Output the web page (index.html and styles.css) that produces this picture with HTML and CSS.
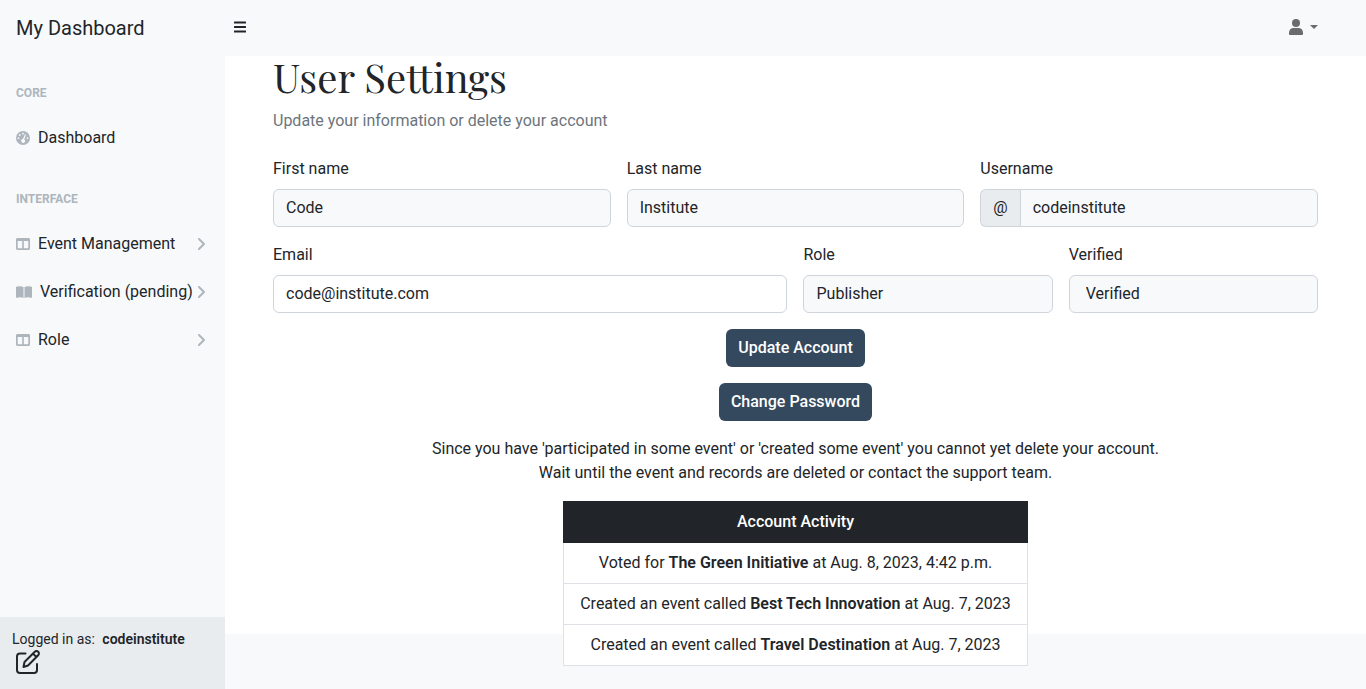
FILE: index.html
```html
<!DOCTYPE html>
<html lang="en">
<head>
<meta charset="utf-8">
<meta name="viewport" content="width=device-width, initial-scale=1">
<title>User Settings</title>
<link rel="stylesheet" href="styles.css">
</head>
<body>
<svg class="sprite" aria-hidden="true">
  <symbol id="columns" viewBox="0 0 14 12"><path fill-rule="evenodd" d="M0 1.500C0 .7.700 0 1.500 0h11c.8 0 1.500.7 1.500 1.500v9c0 .8-.7 1.500-1.500 1.500h-11C.7 12 0 11.300 0 10.500zM1.700 3v7.300h4.500V3zM12.300 3H7.800v7.300h4.500z"/></symbol>
  <symbol id="angle" viewBox="0 0 10 14"><path d="M2 2l5 5-5 5" fill="none" stroke="currentColor" stroke-width="2" stroke-linecap="round" stroke-linejoin="round"/></symbol>
</svg>
<header class="topnav">
  <a class="brand" href="#">My Dashboard</a>
  <button class="toggle" type="button" aria-label="Toggle sidebar">
    <svg width="12" height="12" viewBox="0 0 12 12"><path d="M.7 1.500h10.600M.7 6h10.600M.7 10.500h10.600" fill="none" stroke="currentColor" stroke-width="1.800" stroke-linecap="round"/></svg>
  </button>
  <button class="account" type="button" aria-label="Account menu">
    <svg width="14" height="16" viewBox="0 0 14 16"><circle cx="7" cy="4" r="4" fill="currentColor"/><path d="M0 15v-1.500C0 10.800 2 9 4.500 9h5c2.500 0 4.500 1.800 4.500 4.500V15c0 .6-.4 1-1 1H1c-.6 0-1-.4-1-1z" fill="currentColor"/></svg>
    <span class="caret"></span>
  </button>
</header>
<div class="layout">
  <nav class="sidebar" aria-label="Main">
    <div class="menu">
      <div class="menu-heading">Core</div>
      <a class="menu-link" href="#">
        <svg class="icon" width="14" height="14" viewBox="0 0 14 14"><circle cx="7" cy="7" r="7" fill="currentColor"/><g fill="#f8f9fb"><circle cx="7" cy="2.600" r=".9"/><circle cx="3.700" cy="4" r=".9"/><circle cx="2.500" cy="7.200" r=".9"/><circle cx="11.500" cy="7.200" r=".9"/><path d="M9 3.200l1 .4-1.700 4.800A1.900 1.900 0 1 1 6.900 8z"/></g></svg>
        <span>Dashboard</span>
      </a>
      <div class="menu-heading">Interface</div>
      <a class="menu-link" href="#">
        <svg class="icon" width="14" height="12"><use href="#columns"/></svg>
        <span>Event Management</span>
        <svg class="arrow" width="10" height="14"><use href="#angle"/></svg>
      </a>
      <a class="menu-link" href="#">
        <svg class="icon" width="16" height="12" viewBox="0 0 16 12"><path d="M0 .8C2 .1 5.500-.2 7.500 1v11C5.500 11 3 11 .8 11.700.3 11.900 0 11.600 0 11.200zM16 .8C14 .1 10.500-.2 8.500 1v11c2-1 4.500-1 6.700-.3.500.2.800-.1.800-.5z" fill="currentColor"/></svg>
        <span>Verification (pending)</span>
        <svg class="arrow" width="10" height="14"><use href="#angle"/></svg>
      </a>
      <a class="menu-link" href="#">
        <svg class="icon" width="14" height="12"><use href="#columns"/></svg>
        <span>Role</span>
        <svg class="arrow" width="10" height="14"><use href="#angle"/></svg>
      </a>
    </div>
    <div class="session">
      <div>Logged in as: <strong>codeinstitute</strong></div>
      <a class="edit" href="#" aria-label="Edit account">
        <svg width="24" height="24" viewBox="0 0 24 24" fill="none" stroke="currentColor" stroke-width="2" stroke-linecap="round" stroke-linejoin="round"><path d="M9.500 3.500H4a3 3 0 0 0-3 3V20a3 3 0 0 0 3 3h14a3 3 0 0 0 3-3v-6"/><path d="M7.500 17l1-5L18.800 1.800a2.400 2.400 0 0 1 3.400 3.400L12 15.500zM17 3.600l3.400 3.400"/></svg>
      </a>
    </div>
  </nav>
  <div class="content">
    <main class="page">
      <h1>User Settings</h1>
      <p class="lead">Update your information or delete your account</p>
      <form class="form">
        <div class="field span4"><label for="first">First name</label><input id="first" type="text" value="Code" readonly></div>
        <div class="field span4"><label for="last">Last name</label><input id="last" type="text" value="Institute" readonly></div>
        <div class="field span4"><label for="user">Username</label>
          <div class="group"><span class="addon">@</span><input id="user" type="text" value="codeinstitute" readonly></div>
        </div>
        <div class="field span6"><label for="email">Email</label><input id="email" type="email" value="code@institute.com"></div>
        <div class="field span3"><label for="role">Role</label><input id="role" type="text" value="Publisher" readonly></div>
        <div class="field span3"><label for="verified">Verified</label><input class="inset" id="verified" type="text" value="Verified" readonly></div>
        <div class="actions">
          <button class="btn" type="submit">Update Account</button>
          <button class="btn" type="button">Change Password</button>
        </div>
      </form>
      <p class="notice">Since you have 'participated in some event' or 'created some event' you cannot yet delete your account.<br>Wait until the event and records are deleted or contact the support team.</p>
      <table class="activity">
        <thead><tr><th scope="col">Account Activity</th></tr></thead>
        <tbody>
          <tr><td>Voted for <strong>The Green Initiative</strong> at Aug. 8, 2023, 4:42 p.m.</td></tr>
          <tr><td>Created an event called <strong>Best Tech Innovation</strong> at Aug. 7, 2023</td></tr>
          <tr><td>Created an event called <strong>Travel Destination</strong> at Aug. 7, 2023</td></tr>
        </tbody>
      </table>
    </main>
    <footer class="footer"></footer>
  </div>
</div>
</body>
</html>
```
FILE: styles.css
```css
* { box-sizing: border-box; }
body {
  margin: 0;
  height: 100vh;
  display: flex;
  flex-direction: column;
  overflow: hidden;
  background: #fff;
  color: #212529;
  font: 400 16px/24px Roboto, "Liberation Sans", sans-serif;
}
a { color: inherit; text-decoration: none; }
button, input { font: inherit; color: inherit; }
strong { font-weight: 600; }
.sprite { display: none; }

.topnav {
  display: flex;
  align-items: center;
  flex: none;
  height: 56px;
  background: #f8f9fb;
}
.brand { width: 226px; padding-left: 16px; font-size: 20px; }
.toggle, .account {
  display: flex;
  align-items: center;
  padding: 8px 8px 10px;
  border: 0;
  background: none;
}
.account { margin-left: auto; margin-right: 40px; gap: 7px; color: #6b6b6b; }
.caret {
  border-top: 4px solid;
  border-left: 4px solid transparent;
  border-right: 4px solid transparent;
}

.layout { display: flex; flex: 1; min-height: 0; }
.sidebar {
  display: flex;
  flex-direction: column;
  flex: none;
  width: 225px;
  background: #f8f9fb;
}
.menu { flex: 1; }
.menu-heading {
  padding: 28px 16px 12px;
  font-size: 12px;
  line-height: 18px;
  font-weight: 700;
  text-transform: uppercase;
  color: #adb5bd;
}
.menu-link { display: flex; align-items: center; padding: 12px 18px 12px 16px; white-space: nowrap; }
.icon { flex: none; margin-right: 8px; color: #adb5bd; fill: currentColor; }
.arrow { flex: none; margin-left: auto; color: #adb5bd; }
.session { padding: 12px 12px 15px; background: #e9ecef; font-size: 14px; line-height: 21px; }
.session strong { margin-left: 4px; }
.edit { display: flex; margin-left: 4px; }

.content { display: flex; flex-direction: column; flex: 1; min-width: 0; }
.page { flex: 1; min-height: 0; padding: 0 48px; }
.footer { flex: none; height: 55px; background: #f8f9fb; }
h1 {
  margin: 0 0 12px;
  font: 400 40px/41px "Playfair Display", "Liberation Serif", serif;
}
.lead { margin: 0 0 24px; color: #6c757d; }

.form { display: grid; grid-template-columns: repeat(12, 1fr); gap: 16px; }
.span3 { grid-column: span 3; }
.span4 { grid-column: span 4; }
.span6 { grid-column: span 6; }
.field { display: flex; flex-direction: column; gap: 8px; min-width: 0; }
input {
  width: 100%;
  height: 38px;
  min-width: 0;
  padding: 5px 12px 7px;
  border: 1px solid #ced4da;
  border-radius: 6px;
  background: #fff;
}
input[readonly] { background: #f8f9fb; }
.inset { padding-left: 16px; }
.group { display: flex; }
.addon {
  padding: 6px 12px;
  border: 1px solid #ced4da;
  border-right: 0;
  border-radius: 6px 0 0 6px;
  background: #e9ecef;
}
.group input { border-radius: 0 6px 6px 0; }
.actions {
  grid-column: 1 / -1;
  display: flex;
  flex-direction: column;
  align-items: center;
  gap: 16px;
}
.btn {
  height: 38px;
  padding: 6px 12px;
  border: 0;
  border-radius: 6px;
  background: #34495e;
  color: #fff;
  font-weight: 500;
}
.notice { margin: 16px 0; text-align: center; }

.activity {
  position: relative;
  margin: 0 auto;
  border-collapse: collapse;
  background: #fff;
  text-align: center;
}
.activity th { padding: 8px 16px; border: 1px solid #212529; background: #212529; color: #fff; font-weight: 500; }
.activity td { padding: 8px 16px; border: 1px solid #dee2e6; }
```
